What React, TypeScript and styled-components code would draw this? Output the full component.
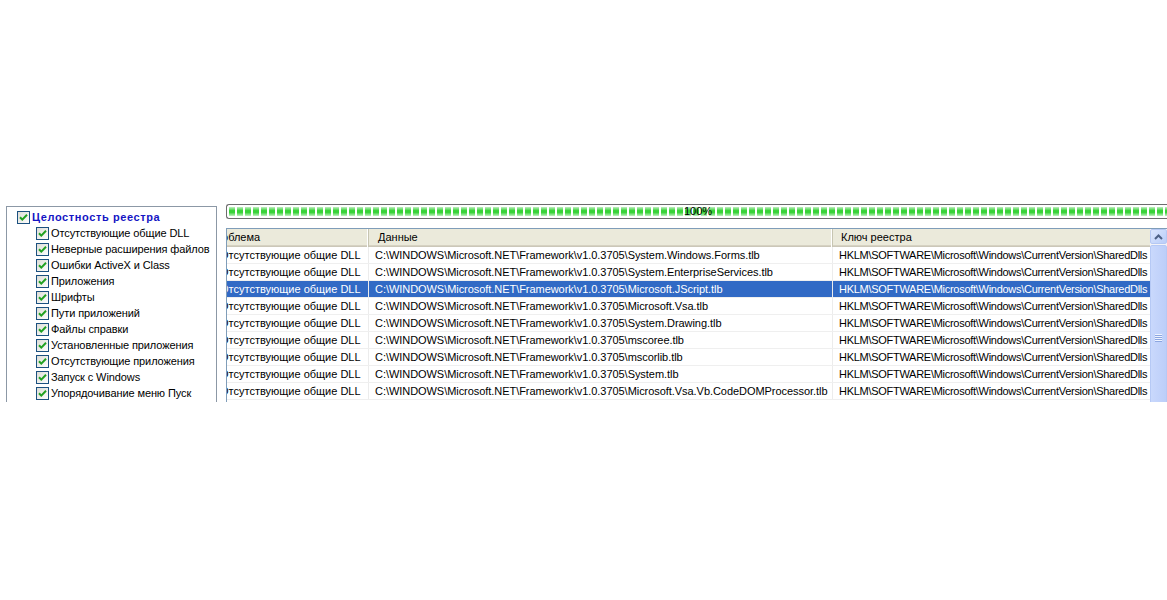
import React from "react";
import styled, { createGlobalStyle } from "styled-components";

const GlobalStyle = createGlobalStyle`
    html, body {
        margin: 0;
        padding: 0;
        background: #ffffff;
        overflow: hidden;
    }
    body {
        font-family: "Liberation Sans", Arial, sans-serif;
        font-size: 11px;
        color: #000000;
    }
`;

const Page = styled.div`
    width: 1167px;
    height: 600px;
    padding-top: 200px;
    box-sizing: border-box;
`;

const Strip = styled.div`
    height: 202px;
    overflow: hidden;
    display: flex;
    align-items: flex-start;
    gap: 9px;
    padding: 4px 0 0 6px;
    box-sizing: border-box;
`;

/* ---------- left tree ---------- */

const TreePanel = styled.div`
    width: 211px;
    height: 260px;
    margin-top: 2px;
    border: 1px solid #8c98a6;
    background: #ffffff;
    padding-top: 2px;
    box-sizing: border-box;
    flex-shrink: 0;
`;

const TreeRow = styled.div<{ $level: number }>`
    height: 16px;
    display: flex;
    align-items: center;
    gap: 2px;
    padding-left: ${(p) => 10 + p.$level * 19}px;
    white-space: nowrap;
`;

const TreeLabel = styled.span<{ $root?: boolean }>`
    font-size: 11px;
    font-weight: ${(p) => (p.$root ? "bold" : "normal")};
    color: ${(p) => (p.$root ? "#1414c4" : "#000000")};
    letter-spacing: ${(p) => (p.$root ? "0.6px" : "-0.1px")};
`;

const CheckBox = () => (
    <svg width="13" height="13" viewBox="0 0 13 13" style={{ flexShrink: 0 }}>
        <defs>
            <linearGradient id="cbg" x1="0" y1="0" x2="1" y2="1">
                <stop offset="0" stopColor="#dcdcd5" />
                <stop offset="1" stopColor="#ffffff" />
            </linearGradient>
        </defs>
        <rect x="0.5" y="0.5" width="12" height="12" fill="url(#cbg)" stroke="#1c5180" />
        <path d="M3 6.2 L5.3 8.6 L10 3.8" fill="none" stroke="#21a121" strokeWidth="2" />
    </svg>
);

/* ---------- right side ---------- */

const RightColumn = styled.div`
    flex: 1;
    min-width: 0;
    display: flex;
    flex-direction: column;
    gap: 9px;
`;

const Progress = styled.div`
    height: 15px;
    border: 1px solid #6c6c6c;
    border-right: none;
    border-radius: 3px 0 0 3px;
    padding: 2px 0 2px 2px;
    box-sizing: border-box;
    background-color: #ffffff;
    background-image: repeating-linear-gradient(
            90deg,
            transparent 0 6px,
            #ffffff 6px 8px
        ),
        linear-gradient(
            180deg,
            #c2f0c2 0%,
            #37d237 40%,
            #37d237 60%,
            #c2f0c2 100%
        );
    background-clip: content-box;
    background-origin: content-box;
    display: flex;
    align-items: center;
    justify-content: center;
    font-size: 11px;
    line-height: 9px;
    color: #000000;
`;

const TableBox = styled.div`
    height: 200px;
    border: 1px solid #7f9db9;
    border-right: none;
    display: flex;
    background: #ffffff;
`;

const Viewport = styled.div`
    flex: 1;
    min-width: 0;
    overflow: hidden;
`;

/* list view is scrolled to the right a little */
const Grid = styled.div`
    margin-left: -20px;
    width: 960px;
`;

const columns = "162px 464px 334px";

const HeaderRow = styled.div`
    display: grid;
    grid-template-columns: ${columns};
    height: 18px;
    background: #ebeadb;
    box-shadow: inset 0 -1px 0 #cbc7b8, inset 0 -2px 0 #d6d2c2;
`;

const HeaderCell = styled.div<{ $pad: number }>`
    padding-left: ${(p) => p.$pad}px;
    line-height: 17px;
    white-space: nowrap;
    overflow: hidden;
    border-right: 1px solid #c7c5b2;
    box-shadow: inset -1px 0 0 #ffffff;
`;

const DataRow = styled.div<{ $selected?: boolean }>`
    display: grid;
    grid-template-columns: ${columns};
    height: 17px;
    background: ${(p) => (p.$selected ? "#316ac5" : "#ffffff")};
    color: ${(p) => (p.$selected ? "#ffffff" : "#000000")};
    border-bottom: 1px solid #efefef;
    box-sizing: border-box;
`;

const Cell = styled.div<{ $pad: number; $spacing?: number }>`
    padding-left: ${(p) => p.$pad}px;
    letter-spacing: ${(p) => p.$spacing ?? 0}px;
    line-height: 16px;
    white-space: nowrap;
    overflow: hidden;
    border-right: 1px solid #ececec;
`;

const ScrollBar = styled.div`
    width: 17px;
    flex-shrink: 0;
    display: flex;
    flex-direction: column;
    background: #f3f3f7;
`;

const ScrollButton = styled.div`
    height: 17px;
    box-sizing: border-box;
    border: 1px solid #b5c8f3;
    border-radius: 2px;
    background: linear-gradient(135deg, #dbe6fd, #b9cdf9);
    display: flex;
    align-items: center;
    justify-content: center;
`;

const ScrollThumb = styled.div`
    height: 208px;
    margin-top: 1px;
    box-sizing: border-box;
    border: 1px solid #b6c9f5;
    border-radius: 2px;
    background: linear-gradient(90deg, #c9d8fc, #bccef9);
    display: flex;
    flex-direction: column;
    align-items: center;
    justify-content: center;
    gap: 1px;
`;

const Grip = styled.div`
    width: 7px;
    height: 1px;
    background: #eef3ff;
    box-shadow: 0 1px 0 #8ca6e0;
`;

const treeItems = [
    "Отсутствующие общие DLL",
    "Неверные расширения файлов",
    "Ошибки ActiveX и Class",
    "Приложения",
    "Шрифты",
    "Пути приложений",
    "Файлы справки",
    "Установленные приложения",
    "Отсутствующие приложения",
    "Запуск с Windows",
    "Упорядочивание меню Пуск",
];

const basePath = "C:\\WINDOWS\\Microsoft.NET\\Framework\\v1.0.3705\\";
const regKey = "HKLM\\SOFTWARE\\Microsoft\\Windows\\CurrentVersion\\SharedDlls";

const files = [
    "System.Windows.Forms.tlb",
    "System.EnterpriseServices.tlb",
    "Microsoft.JScript.tlb",
    "Microsoft.Vsa.tlb",
    "System.Drawing.tlb",
    "mscoree.tlb",
    "mscorlib.tlb",
    "System.tlb",
    "Microsoft.Vsa.Vb.CodeDOMProcessor.tlb",
];

const App: React.FC = () => {
    return (
        <>
            <GlobalStyle />
            <Page>
                <Strip>
                    <TreePanel>
                        <TreeRow $level={0}>
                            <CheckBox />
                            <TreeLabel $root>Целостность реестра</TreeLabel>
                        </TreeRow>
                        {treeItems.map((item) => (
                            <TreeRow $level={1} key={item}>
                                <CheckBox />
                                <TreeLabel>{item}</TreeLabel>
                            </TreeRow>
                        ))}
                    </TreePanel>

                    <RightColumn>
                        <Progress>100%</Progress>
                        <TableBox>
                            <Viewport>
                                <Grid>
                                    <HeaderRow>
                                        <HeaderCell $pad={1}>Проблема</HeaderCell>
                                        <HeaderCell $pad={9}>Данные</HeaderCell>
                                        <HeaderCell $pad={8}>Ключ реестра</HeaderCell>
                                    </HeaderRow>
                                    {files.map((f, i) => (
                                        <DataRow key={f} $selected={i === 2}>
                                            <Cell $pad={13}>Отсутствующие общие DLL</Cell>
                                            <Cell $pad={6} $spacing={-0.05}>
                                                {basePath + f}
                                            </Cell>
                                            <Cell $pad={6} $spacing={-0.28}>
                                                {regKey}
                                            </Cell>
                                        </DataRow>
                                    ))}
                                </Grid>
                            </Viewport>
                            <ScrollBar>
                                <ScrollButton>
                                    <svg width="9" height="6" viewBox="0 0 9 6">
                                        <path
                                            d="M1 5 L4.5 1.5 L8 5"
                                            fill="none"
                                            stroke="#4d6185"
                                            strokeWidth="2"
                                        />
                                    </svg>
                                </ScrollButton>
                                <ScrollThumb>
                                    <Grip />
                                    <Grip />
                                    <Grip />
                                    <Grip />
                                </ScrollThumb>
                            </ScrollBar>
                        </TableBox>
                    </RightColumn>
                </Strip>
            </Page>
        </>
    );
};

export default App;
